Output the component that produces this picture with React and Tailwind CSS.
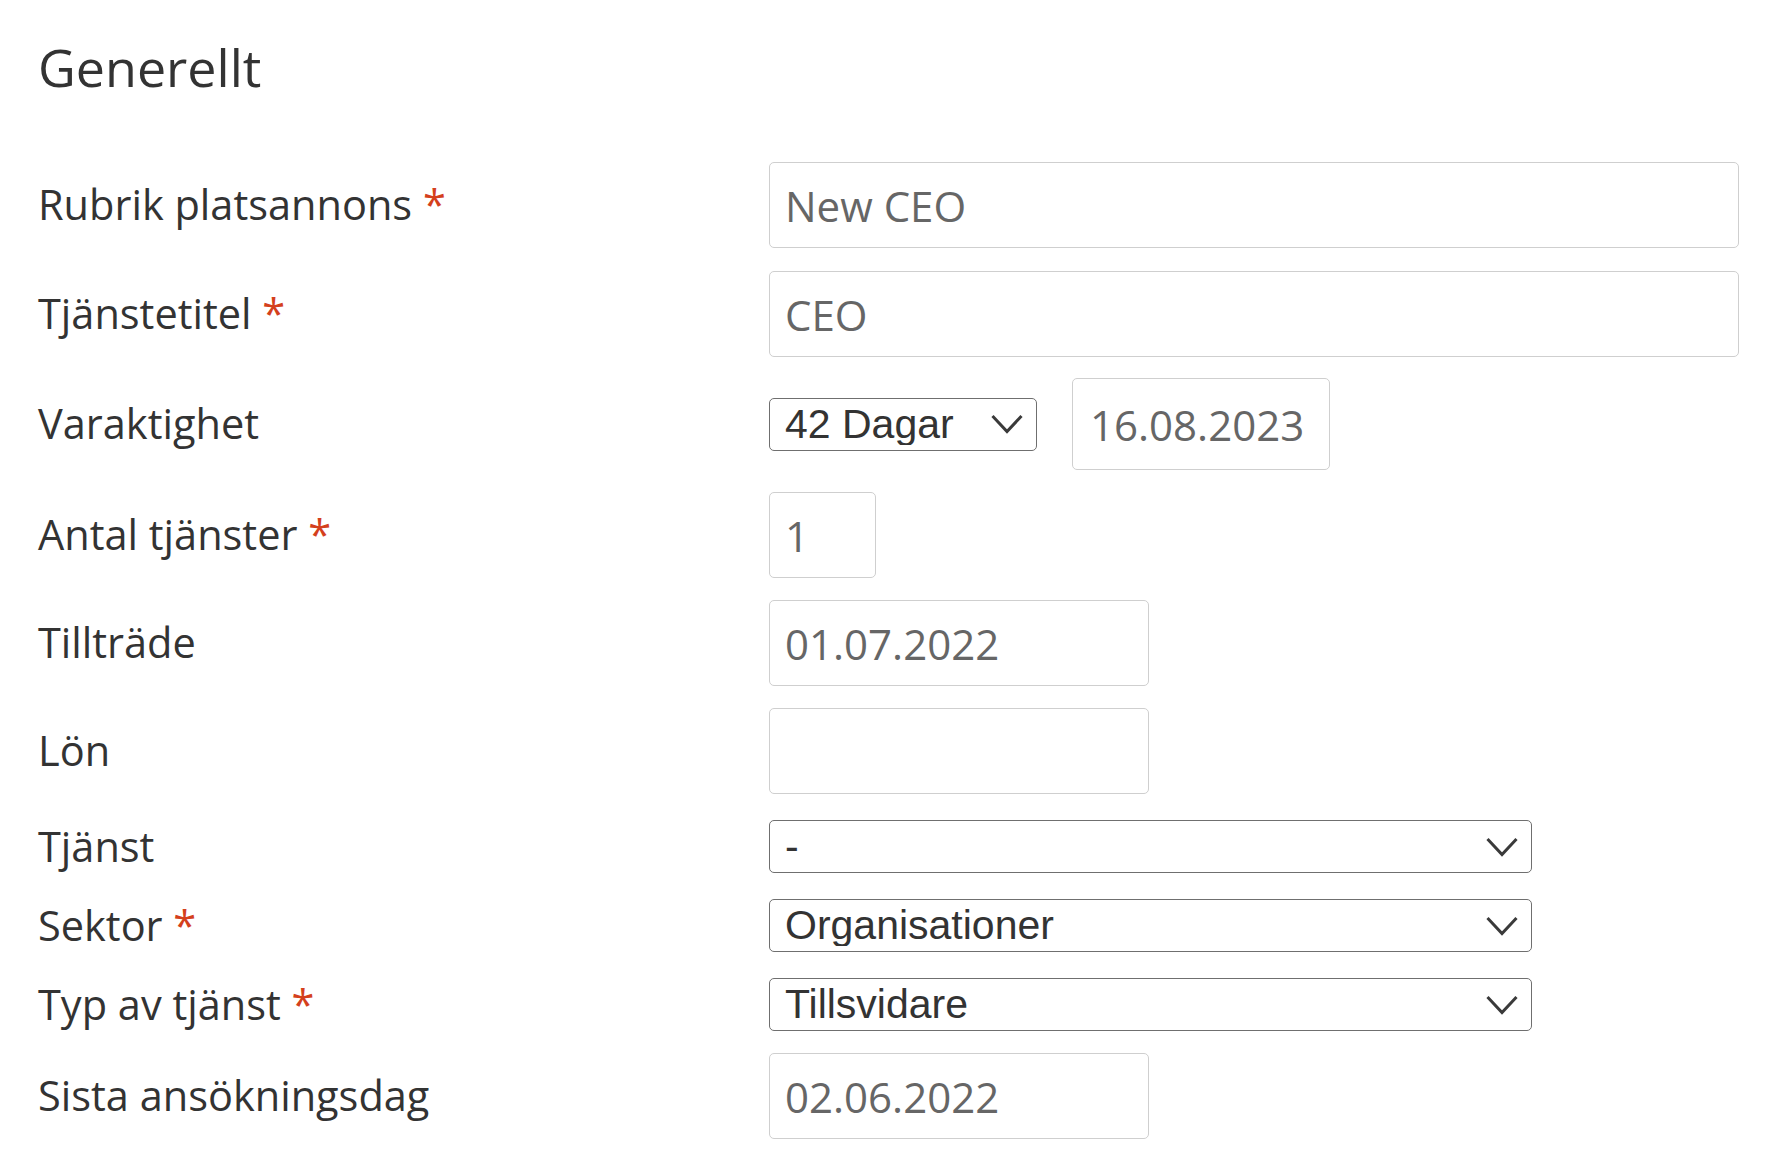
import clsx from 'clsx';

const Chevron = () => (
  <svg
    className="pointer-events-none absolute right-[14px] top-1/2 -translate-y-1/2"
    width="32"
    height="20"
    viewBox="0 0 32 20"
    fill="none"
  >
    <polyline points="1.5,2 16,17.5 30.5,2" stroke="#3a3a3a" strokeWidth="3" />
  </svg>
);

const Row = ({ label, required, className, children }) => (
  <div className={clsx('flex items-center', className)}>
    <label className="w-[731px] shrink-0 text-[41.5px] leading-[1.2] text-[#333]">
      {label}
      {required && <span className="text-[#d4401c]"> *</span>}
    </label>
    <div className="flex items-center gap-[35px]">{children}</div>
  </div>
);

const TextInput = ({ value = '', className }) => (
  <input
    type="text"
    defaultValue={value}
    className={clsx(
      'h-[86px] rounded-[5px] border border-[#cfcfcf] bg-white px-[15px] text-[42px] text-[#666] outline-none',
      className
    )}
  />
);

const Select = ({ value, className }) => (
  <div className={clsx('relative', className)}>
    <select
      defaultValue={value}
      className="h-[53px] w-full appearance-none rounded-[5px] border border-[#6f6f6f] bg-white pl-[15px] pr-[60px] text-[41px] leading-none text-[#333] outline-none"
      style={{ fontFamily: '"Liberation Sans", Arial, sans-serif' }}
    >
      <option value={value}>{value}</option>
    </select>
    <Chevron />
  </div>
);

export default function App() {
  return (
    <div
      className="min-h-screen bg-white pl-[38px] pt-[36px]"
      style={{ fontFamily: '"Open Sans", sans-serif' }}
    >
      <h2 className="mb-[64px] text-[52px] font-normal leading-[62px] text-[#333]">Generellt</h2>

      <div className="flex flex-col">
        <Row label="Rubrik platsannons" required>
          <TextInput value="New CEO" className="w-[970px]" />
        </Row>
        <Row label="Tjänstetitel" required className="mt-[23px]">
          <TextInput value="CEO" className="w-[970px]" />
        </Row>
        <Row label="Varaktighet" className="mt-[21px]">
          <Select value="42 Dagar" className="w-[268px]" />
          <TextInput value="16.08.2023" className="h-[92px] w-[258px] px-[17px]" />
        </Row>
        <Row label="Antal tjänster" required className="mt-[22px]">
          <TextInput value="1" className="w-[107px]" />
        </Row>
        <Row label="Tillträde" className="mt-[22px]">
          <TextInput value="01.07.2022" className="w-[380px]" />
        </Row>
        <Row label="Lön" className="mt-[22px]">
          <TextInput className="w-[380px]" />
        </Row>
        <Row label="Tjänst" className="mt-[26px]">
          <Select value="-" className="w-[763px]" />
        </Row>
        <Row label="Sektor" required className="mt-[26px]">
          <Select value="Organisationer" className="w-[763px]" />
        </Row>
        <Row label="Typ av tjänst" required className="mt-[26px]">
          <Select value="Tillsvidare" className="w-[763px]" />
        </Row>
        <Row label="Sista ansökningsdag" className="mt-[22px]">
          <TextInput value="02.06.2022" className="w-[380px]" />
        </Row>
      </div>
    </div>
  );
}
